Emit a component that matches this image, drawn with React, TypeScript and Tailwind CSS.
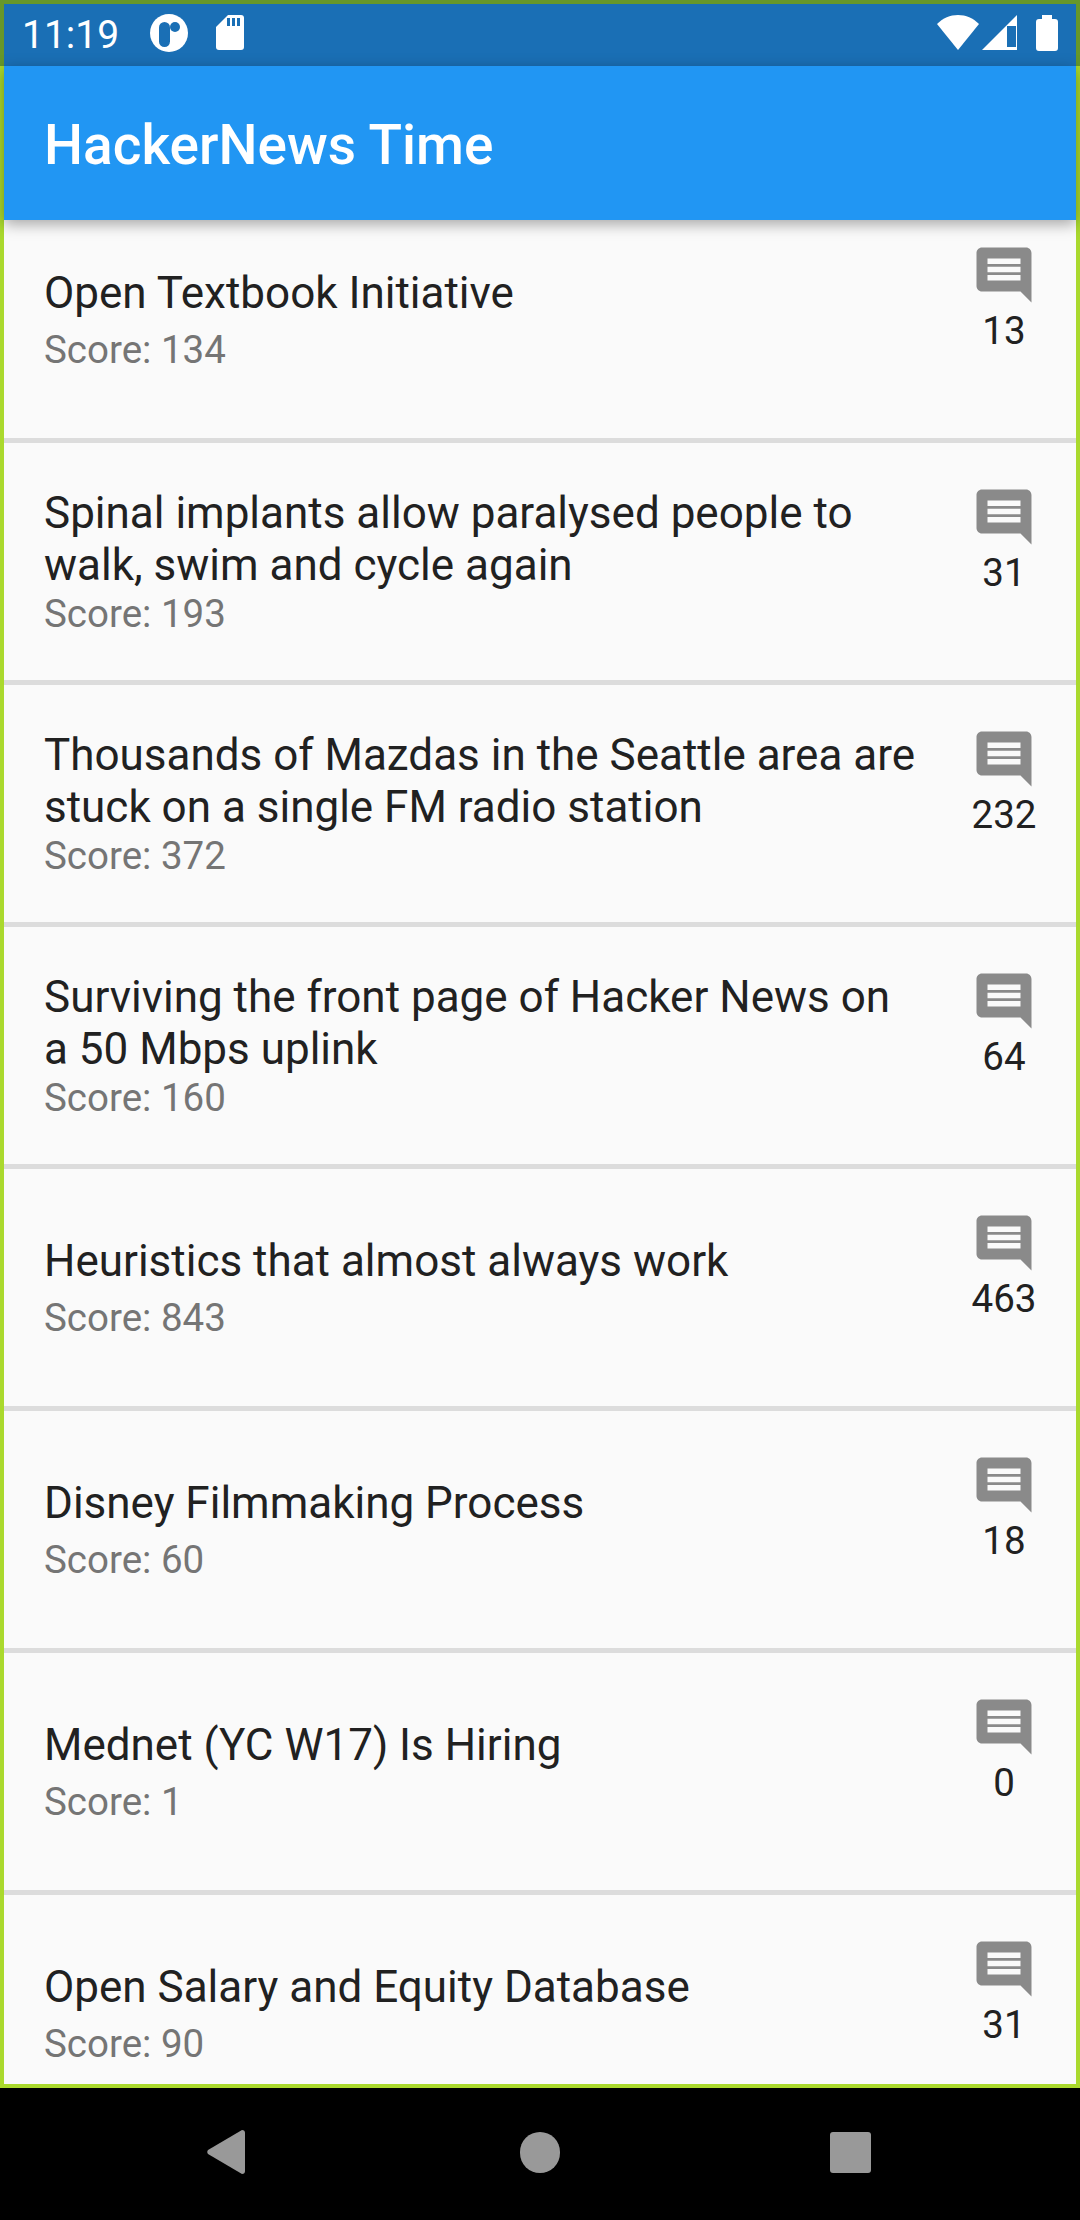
const stories = [
  { title: "Open Textbook Initiative", score: 134, comments: 13 },
  { title: "Spinal implants allow paralysed people to walk, swim and cycle again", score: 193, comments: 31 },
  { title: "Thousands of Mazdas in the Seattle area are stuck on a single FM radio station", score: 372, comments: 232 },
  { title: "Surviving the front page of Hacker News on a 50 Mbps uplink", score: 160, comments: 64 },
  { title: "Heuristics that almost always work", score: 843, comments: 463 },
  { title: "Disney Filmmaking Process", score: 60, comments: 18 },
  { title: "Mednet (YC W17) Is Hiring", score: 1, comments: 0 },
  { title: "Open Salary and Equity Database", score: 90, comments: 31 },
];

function CommentIcon() {
  return (
    <svg width="66" height="66" viewBox="0 0 24 24" fill="#8a8a8a">
      <path d="M21.99 4c0-1.1-.89-2-1.99-2H4c-1.1 0-2 .9-2 2v12c0 1.1.9 2 2 2h14l4 4-.01-18zM18 14H6v-2h12v2zm0-3H6V9h12v2zm0-3H6V6h12v2z" />
    </svg>
  );
}

function Row({ title, score, comments }: { title: string; score: number; comments: number }) {
  return (
    <div className="flex h-[242px] shrink-0 border-b-[5px] border-[#dcdcdc]">
      <div className="flex min-w-0 flex-1 flex-col justify-center pl-[40px] pr-[20px]">
        <div className="min-h-[60px] text-[44px] leading-[52px] text-[#212121]">{title}</div>
        <div className="text-[38.5px] leading-[45px] text-[#757575]">{`Score: ${score}`}</div>
      </div>
      <div className="mr-[6px] flex w-[132px] shrink-0 flex-col items-center pt-[41px]">
        <CommentIcon />
        <div className="-mt-[3px] text-[38.5px] leading-[52px] text-[#212121]">{comments}</div>
      </div>
    </div>
  );
}

function StatusBar() {
  return (
    <div className="-mx-[4px] -mt-[4px] flex h-[66px] shrink-0 items-center justify-between border-x-[4px] border-t-[4px] border-[#66972a] bg-[#1a6fb5] pb-[5px] pl-[18px] pr-[18px] text-white">
      <div className="flex items-center">
        <span className="mt-[5px] w-[110px] text-[39px] leading-[44px]">11:19</span>
        <svg width="38" height="38" viewBox="0 0 38 38" className="ml-[18px]">
          <circle cx="19" cy="19" r="19" fill="#fff" />
          <rect x="9" y="8" width="11" height="25" rx="5.5" fill="#1a6fb5" />
          <circle cx="25" cy="13" r="5" fill="#1a6fb5" />
        </svg>
        <svg width="28" height="35" viewBox="0 0 28 35" className="ml-[28px]">
          <path d="M12 0h13a3 3 0 0 1 3 3v29a3 3 0 0 1-3 3H3a3 3 0 0 1-3-3V12z" fill="#fff" />
          <path d="M11 3h3v8h-3zM16 3h3v8h-3zM21 3h3v8h-3z" fill="#1a6fb5" />
        </svg>
      </div>
      <div className="flex items-center">
        <svg width="42" height="36" viewBox="0 0 42 36">
          <path d="M0 9C6 3 13 0 21 0s15 3 21 9L21 35z" fill="#fff" />
        </svg>
        <svg width="35" height="35" viewBox="0 0 35 35" className="ml-[3px]">
          <path d="M0 35 35 0v35zM25 11v21h9V11z" fillRule="evenodd" fill="#fff" />
          <path d="M25 11h8v21h-8z" fill="#1a6fb5" />
        </svg>
        <svg width="22" height="36" viewBox="0 0 22 36" className="ml-[19px]">
          <path d="M6 0h10v4h3a3 3 0 0 1 3 3v26a3 3 0 0 1-3 3H3a3 3 0 0 1-3-3V7a3 3 0 0 1 3-3h3z" fill="#fff" />
        </svg>
      </div>
    </div>
  );
}

function NavBar() {
  return (
    <div className="flex h-[132px] items-center bg-black pb-[4px] pl-[207px]">
      <svg width="38" height="44" viewBox="0 0 38 44" fill="#999">
        <path d="M35 0c2 0 3 1 3 3v38c0 2-1 3-3 3L1 24c-1-1-1-3 0-4z" />
      </svg>
      <div className="ml-[275px] h-[41px] w-[40px] rounded-full bg-[#999]" />
      <div className="ml-[270px] h-[41px] w-[41px] rounded-[3px] bg-[#999]" />
    </div>
  );
}

export default function App() {
  return (
    <div className="flex h-[2220px] w-[1080px] flex-col overflow-hidden bg-black font-['Roboto',sans-serif]">
      <div className="flex h-[2088px] shrink-0 flex-col border-[4px] border-[#aad92d]">
        <StatusBar />
        <div className="relative z-10 flex h-[154px] shrink-0 items-center bg-[#2196f3] pl-[40px] pt-[4px] shadow-[0_4px_14px_rgba(0,0,0,0.35)]">
          <h1 className="text-[55px] font-medium leading-[60px] text-white">HackerNews Time</h1>
        </div>
        <div className="min-h-0 flex-1 overflow-hidden bg-[#fafafa]">
          <div className="-mt-[19px] flex flex-col">
            {stories.map((s) => (
              <Row key={s.title} {...s} />
            ))}
          </div>
        </div>
      </div>
      <NavBar />
    </div>
  );
}
